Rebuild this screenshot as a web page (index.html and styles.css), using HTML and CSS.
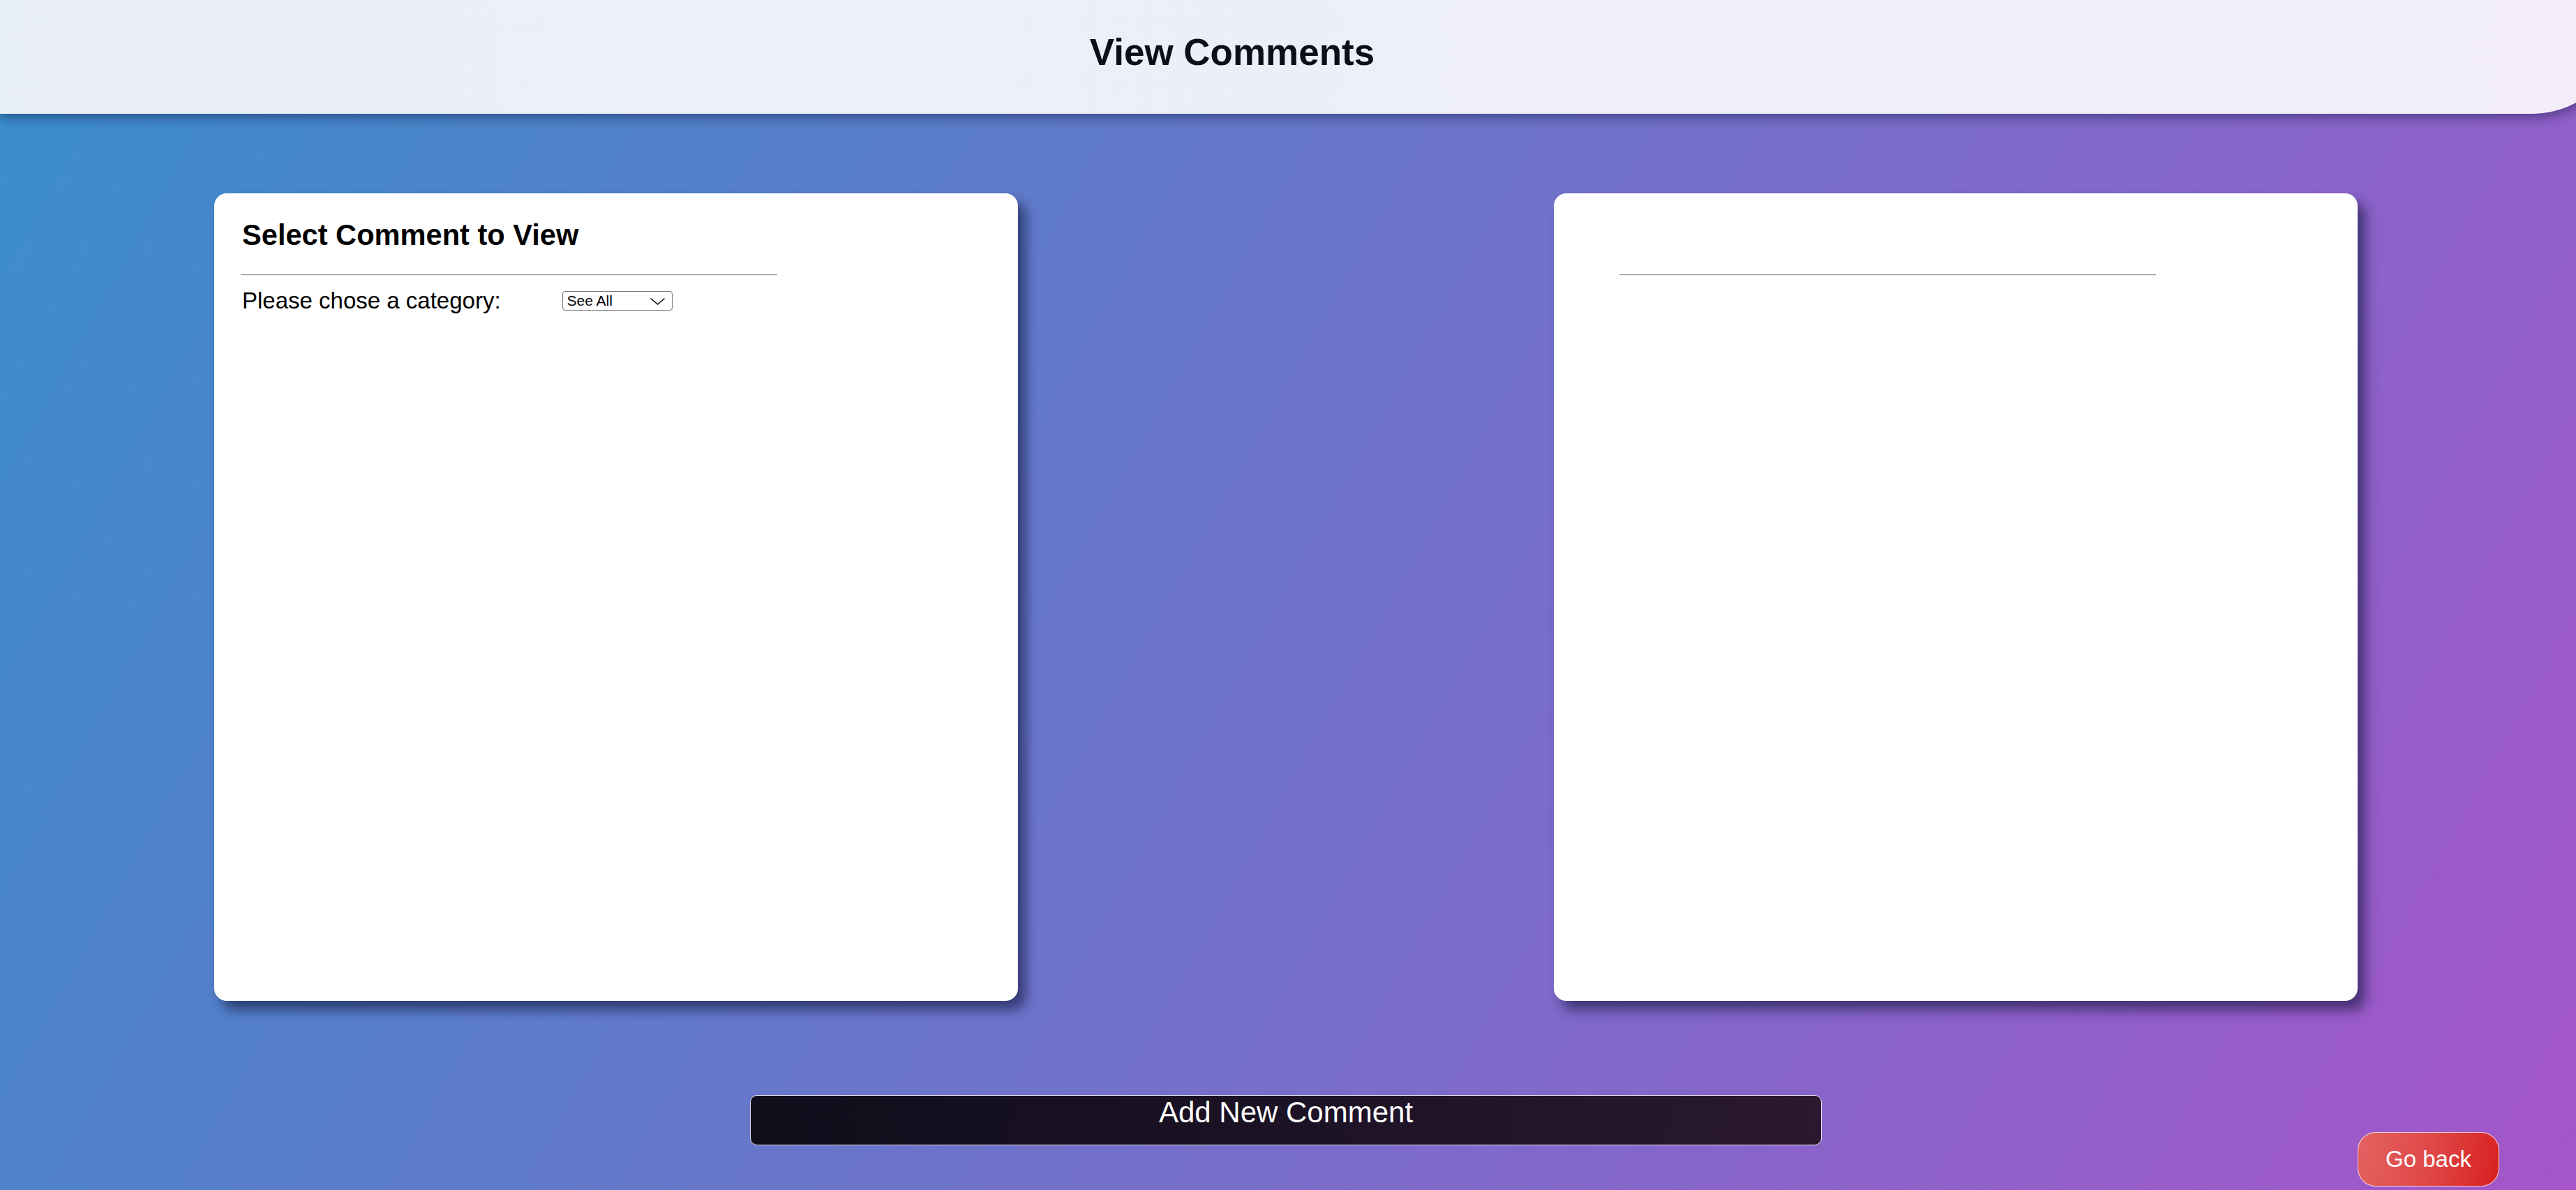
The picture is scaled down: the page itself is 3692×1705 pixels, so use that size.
FILE: index.html
```html
<!DOCTYPE html>
<html lang="en">
<head>
<meta charset="utf-8">
<title>View Comments</title>
<link rel="stylesheet" href="styles.css">
</head>
<body>
  <header class="top-bar">
    <h1 class="page-title">View Comments</h1>
  </header>
  <main class="panels">
    <section class="card">
      <h2 class="card-title">Select Comment to View</h2>
      <hr class="card-rule">
      <div class="filter-row">
        <label class="filter-label" for="category">Please chose a category:</label>
        <span class="select-wrap">
          <select class="filter-select" id="category">
            <option>See All</option>
          </select>
          <svg class="select-chevron" width="21" height="10" viewBox="0 0 21 10" aria-hidden="true">
            <path d="M1 1 L10.5 9 L20 1" fill="none" stroke="#000" stroke-width="1.6" stroke-linecap="round" stroke-linejoin="round"/>
          </svg>
        </span>
      </div>
    </section>
    <section class="card">
      <h2 class="card-title"></h2>
      <hr class="card-rule card-rule-offset">
    </section>
  </main>
  <footer class="actions">
    <button class="add-btn">Add New Comment</button>
    <button class="back-btn">Go back</button>
  </footer>
</body>
</html>
```

FILE: styles.css
```css
html {
  min-height: 100%;
  margin: 0;
  padding: 0;
}

body {
  margin: 0;
  padding: 0;
  min-height: 100vh;
  overflow-x: hidden;
  font-family: "Liberation Sans", Arial, sans-serif;
  background: linear-gradient(119deg, #3a8ecc 0%, #6f73ca 50%, #a455c9 100%);
}

.top-bar {
  box-sizing: border-box;
  height: 163px;
  margin-right: -66px;
  padding: 44px 226px 0 0;
  display: flex;
  justify-content: center;
  align-items: flex-start;
  background: linear-gradient(90deg, #eaf0f8 0%, #edeff8 50%, #f3eef9 100%);
  border-bottom-right-radius: 128px;
  box-shadow: 0 6px 16px rgba(10, 20, 60, 0.45);
  position: relative;
  z-index: 1;
}

.page-title {
  margin: 0;
  font-size: 53px;
  font-weight: 700;
  line-height: 61px;
  color: #0b0f19;
}

.panels {
  display: flex;
  justify-content: space-between;
  padding: 114px 313px 0 307px;
}

.card {
  box-sizing: border-box;
  width: 1152px;
  height: 1157px;
  padding: 36px 40px;
  background: #ffffff;
  border-radius: 18px;
  box-shadow: 11px 13px 18px rgba(15, 20, 60, 0.6);
}

.card-title {
  margin: 0;
  min-height: 47px;
  font-size: 41.6px;
  line-height: 47px;
  font-weight: 700;
  color: #000000;
}

.card-rule {
  width: 769px;
  height: 0;
  margin: 33px 0 0 -2px;
  border: 0;
  border-top: 1px solid #9c9c9c;
  border-bottom: 1px solid #e4e4e4;
}

.card-rule-offset {
  margin-left: 54px;
}

.filter-row {
  display: flex;
  align-items: center;
  gap: 88px;
  margin-top: 17px;
}

.filter-label {
  font-size: 33px;
  line-height: 37px;
  color: #000000;
}

.select-wrap {
  position: relative;
  display: inline-flex;
}

.filter-select {
  box-sizing: border-box;
  width: 158px;
  height: 28px;
  padding: 0 0 0 6px;
  -webkit-appearance: none;
  appearance: none;
  font-family: "Liberation Sans", Arial, sans-serif;
  font-size: 21px;
  line-height: 26px;
  color: #000000;
  background: #ffffff;
  border: 1px solid #767676;
  border-radius: 4px;
}

.select-chevron {
  position: absolute;
  left: 126px;
  top: 10px;
  pointer-events: none;
}

.actions {
  display: grid;
  grid-template-columns: 1fr 1536px 1fr;
  grid-template-rows: 131px;
  padding: 135px 6px 5px 0;
}

.add-btn {
  grid-column: 2;
  align-self: start;
  box-sizing: border-box;
  height: 72px;
  padding: 0;
  font-family: "Liberation Sans", Arial, sans-serif;
  font-size: 42px;
  line-height: 48px;
  color: #ffffff;
  display: flex;
  justify-content: center;
  align-items: flex-start;
  background: linear-gradient(90deg, #0f0e1b 0%, #1c1225 50%, #2a1830 100%);
  border: 1px solid #e6e2ea;
  border-radius: 10px;
}

.back-btn {
  grid-column: 3;
  justify-self: end;
  align-self: end;
  margin-right: 104px;
  box-sizing: border-box;
  width: 203px;
  height: 78px;
  padding: 0;
  font-family: "Liberation Sans", Arial, sans-serif;
  font-size: 33px;
  color: #ffffff;
  background: linear-gradient(100deg, #e46262 0%, #e04848 50%, #d82020 100%);
  border: 1px solid rgba(255, 255, 255, 0.75);
  border-radius: 26px;
}
```
